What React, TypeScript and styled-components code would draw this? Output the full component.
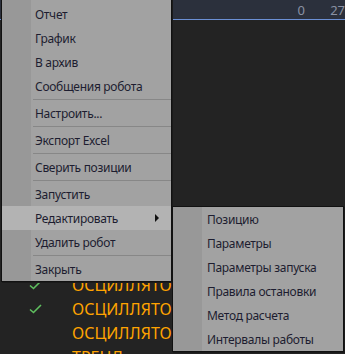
import React from "react";
import styled, { createGlobalStyle } from "styled-components";

const Global = createGlobalStyle`
  html, body { margin: 0; padding: 0; background: #232323; overflow: hidden; }
  #root { width: 345px; height: 354px; }
`;

const Page = styled.div`
  position: relative;
  width: 345px;
  height: 354px;
  overflow: hidden;
  background: #232323;
  font-family: "Noto Sans", "Open Sans", sans-serif;
`;

const Header = styled.div`
  height: 19px;
  background: #2b303c;
  border-bottom: 1px solid #6b8fd4;
  display: flex;
  justify-content: flex-end;
  align-items: center;
  color: #8a91a3;
  font-size: 13px;
  white-space: nowrap;
`;

const HeadCell = styled.div<{ $w: number }>`
  width: ${(p) => p.$w}px;
  text-align: right;
  flex: none;
`;

const Rows = styled.div`
  padding-top: 253px;
  display: flex;
  flex-direction: column;
`;

const Row = styled.div`
  height: 24px;
  display: flex;
  align-items: center;
  white-space: nowrap;
`;

const CheckCell = styled.div`
  width: 72px;
  flex: none;
  display: flex;
  justify-content: flex-start;
  padding-left: 29px;
  box-sizing: border-box;
`;

const Name = styled.span`
  color: #ffa300;
  font-size: 16px;
  font-family: "Noto Sans", sans-serif;
`;

const Menu = styled.div<{ $left: number; $top: number; $width: number }>`
  position: absolute;
  left: ${(p) => p.$left}px;
  top: ${(p) => p.$top}px;
  width: ${(p) => p.$width}px;
  box-sizing: border-box;
  border: 1px solid #111;
  box-shadow: 1px 1px 0 #1a1a1a;
  background: linear-gradient(to right, #989898 0, #989898 29px, #a2a2a2 29px);
  display: flex;
  flex-direction: column;
  font-family: "Noto Sans", "Open Sans", sans-serif;
  font-size: 12px;
  letter-spacing: -0.3px;
  color: #1d1d30;
`;

const Item = styled.div<{ $active?: boolean; $pad: number }>`
  height: 24px;
  padding-left: ${(p) => p.$pad}px;
  display: flex;
  align-items: center;
  position: relative;
  white-space: nowrap;
  background: ${(p) => (p.$active ? "#b3b3b3" : "transparent")};
`;

const Sep = styled.div`
  height: 1px;
  margin: 1px 0 1px 31px;
  background: #878787;
`;

const Arrow = styled.span`
  position: absolute;
  right: 12px;
  top: 8px;
  width: 0;
  height: 0;
  border-top: 4px solid transparent;
  border-bottom: 4px solid transparent;
  border-left: 4px solid #111;
`;

function Check() {
  return (
    <svg width="13" height="10" viewBox="0 0 13 10">
      <path d="M1 5.5 L4.5 8.5 L12 1" fill="none" stroke="#5fbf5f" strokeWidth="1.6" />
    </svg>
  );
}

const rows = [
  { checked: true, name: "ОСЦИЛЛЯТОР" },
  { checked: true, name: "ОСЦИЛЛЯТОР" },
  { checked: false, name: "ОСЦИЛЛЯТОР" },
  { checked: false, name: "ТРЕНД" },
];

type Entry = { label: string; sep?: boolean; sub?: boolean; active?: boolean };

const mainItems: Entry[] = [
  { label: "Отчет" },
  { label: "График" },
  { label: "В архив" },
  { label: "Сообщения робота", sep: true },
  { label: "Настроить...", sep: true },
  { label: "Экспорт Excel", sep: true },
  { label: "Сверить позиции", sep: true },
  { label: "Запустить" },
  { label: "Редактировать", sub: true, active: true },
  { label: "Удалить робот", sep: true },
  { label: "Закрыть" },
];

const subItems = [
  "Позицию",
  "Параметры",
  "Параметры запуска",
  "Правила остановки",
  "Метод расчета",
  "Интервалы работы",
];

export default function App() {
  return (
    <Page>
      <Global />
      <Header>
        <HeadCell $w={305}>0</HeadCell>
        <HeadCell $w={40}>27</HeadCell>
      </Header>
      <Rows>
        {rows.map((r, i) => (
          <Row key={i}>
            <CheckCell>{r.checked && <Check />}</CheckCell>
            <Name>{r.name}</Name>
          </Row>
        ))}
      </Rows>
      <Menu $left={1} $top={-1} $width={171} style={{ paddingTop: 2 }}>
        {mainItems.map((m, i) => (
          <React.Fragment key={i}>
            <Item $pad={33} $active={m.active}>
              {m.label}
              {m.sub && <Arrow />}
            </Item>
            {m.sep && <Sep />}
          </React.Fragment>
        ))}
      </Menu>
      <Menu $left={172} $top={206} $width={172}>
        {subItems.map((s) => (
          <Item key={s} $pad={34}>
            {s}
          </Item>
        ))}
      </Menu>
    </Page>
  );
}
